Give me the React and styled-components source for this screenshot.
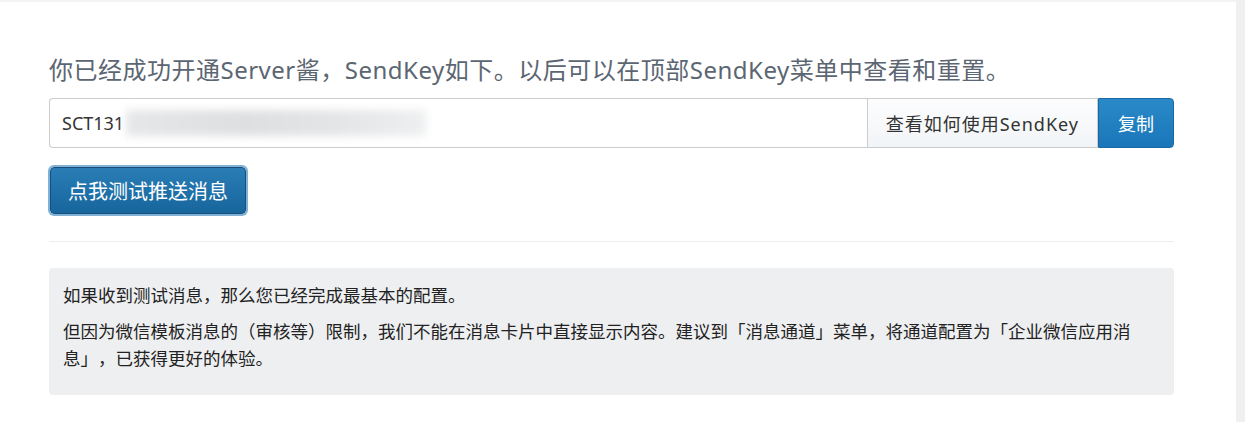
import styled, { createGlobalStyle } from "styled-components";

const GlobalStyle = createGlobalStyle`
  html, body {
    margin: 0;
    padding: 0;
    background: #fff;
  }
  body {
    font-family: "Noto Sans", "Noto Sans CJK SC", sans-serif;
    color: #333;
    text-spacing-trim: space-all;
  }
`;

const Page = styled.div`
  display: flex;
  height: 422px;
  border-top: 2px solid #f4f4f4;
  box-sizing: border-box;
`;

const Main = styled.div`
  flex: 1;
  padding: 50px 0 0 49px;
`;

const ScrollTrack = styled.div`
  width: 9px;
  background: #f0f0f0;
  margin-top: -2px;
`;

const Container = styled.div`
  width: 1125px;
`;

const Heading = styled.h2`
  margin: 0 0 10px;
  font-size: 24px;
  font-weight: 400;
  line-height: 36px;
  letter-spacing: 0.5px;
  color: #5b6672;
`;

const InputGroup = styled.div`
  display: flex;
  height: 50px;
`;

const KeyField = styled.div`
  flex: 1;
  display: flex;
  align-items: center;
  padding: 0 12px;
  border: 1px solid #ccc;
  border-right: none;
  border-radius: 4px 0 0 4px;
  font-size: 18px;
  color: #333;
  overflow: hidden;
`;

const Masked = styled.span`
  display: inline-block;
  width: 300px;
  height: 26px;
  margin-left: 2px;
  background: linear-gradient(90deg, #e6e7e9, #dedfe1 40%, #e4e5e7 70%, #eeeff0);
  filter: blur(4px);
`;

const AddonButton = styled.button`
  font-family: inherit;
  font-size: 18px;
  letter-spacing: ${({ $spacing }) => $spacing || 0}px;
  padding: 0 ${({ $pad }) => $pad}px;
  border: 1px solid ${({ $primary }) => ($primary ? "#1c68a3" : "#ccc")};
  color: ${({ $primary }) => ($primary ? "#fff" : "#333")};
  background: ${({ $primary }) =>
    $primary
      ? "linear-gradient(#2a8ac9, #1a76b9)"
      : "linear-gradient(#fdfdfe, #f1f4f7)"};
  border-radius: ${({ $last }) => ($last ? "0 4px 4px 0" : "0")};
  white-space: nowrap;
`;

const TestButton = styled.button`
  display: block;
  margin-top: 19px;
  height: 47px;
  padding: 0 17px;
  font-family: inherit;
  font-size: 20px;
  color: #fff;
  background: linear-gradient(#2a7db6, #17669d);
  border: 1px solid #1a4e7a;
  border-radius: 4px;
  box-shadow: 0 0 0 2px #7fb2d6;
  margin-left: 1px;
`;

const Divider = styled.hr`
  margin: 27px 0 26px;
  border: none;
  border-top: 1px solid #eee;
`;

const Notice = styled.div`
  background: #eeeff1;
  border-radius: 4px;
  padding: 14px 30px 14px 14px;
  font-size: 17.5px;
  line-height: 27px;
  color: #222;
`;

const Para = styled.p`
  margin: 0 0 9px;
`;

export default function App() {
  return (
    <>
      <GlobalStyle />
      <Page>
        <Main>
          <Container>
            <Heading>
              你已经成功开通Server酱，SendKey如下。以后可以在顶部SendKey菜单中查看和重置。
            </Heading>
            <InputGroup>
              <KeyField>
                SCT131
                <Masked />
              </KeyField>
              <AddonButton $pad={18} $spacing={1}>
                查看如何使用SendKey
              </AddonButton>
              <AddonButton $primary $last $pad={19}>
                复制
              </AddonButton>
            </InputGroup>
            <TestButton>点我测试推送消息</TestButton>
            <Divider />
            <Notice>
              <Para>如果收到测试消息，那么您已经完成最基本的配置。</Para>
              <Para>
                但因为微信模板消息的（审核等）限制，我们不能在消息卡片中直接显示内容。建议到「消息通道」菜单，将通道配置为「企业微信应用消息」，已获得更好的体验。
              </Para>
            </Notice>
          </Container>
        </Main>
        <ScrollTrack />
      </Page>
    </>
  );
}
